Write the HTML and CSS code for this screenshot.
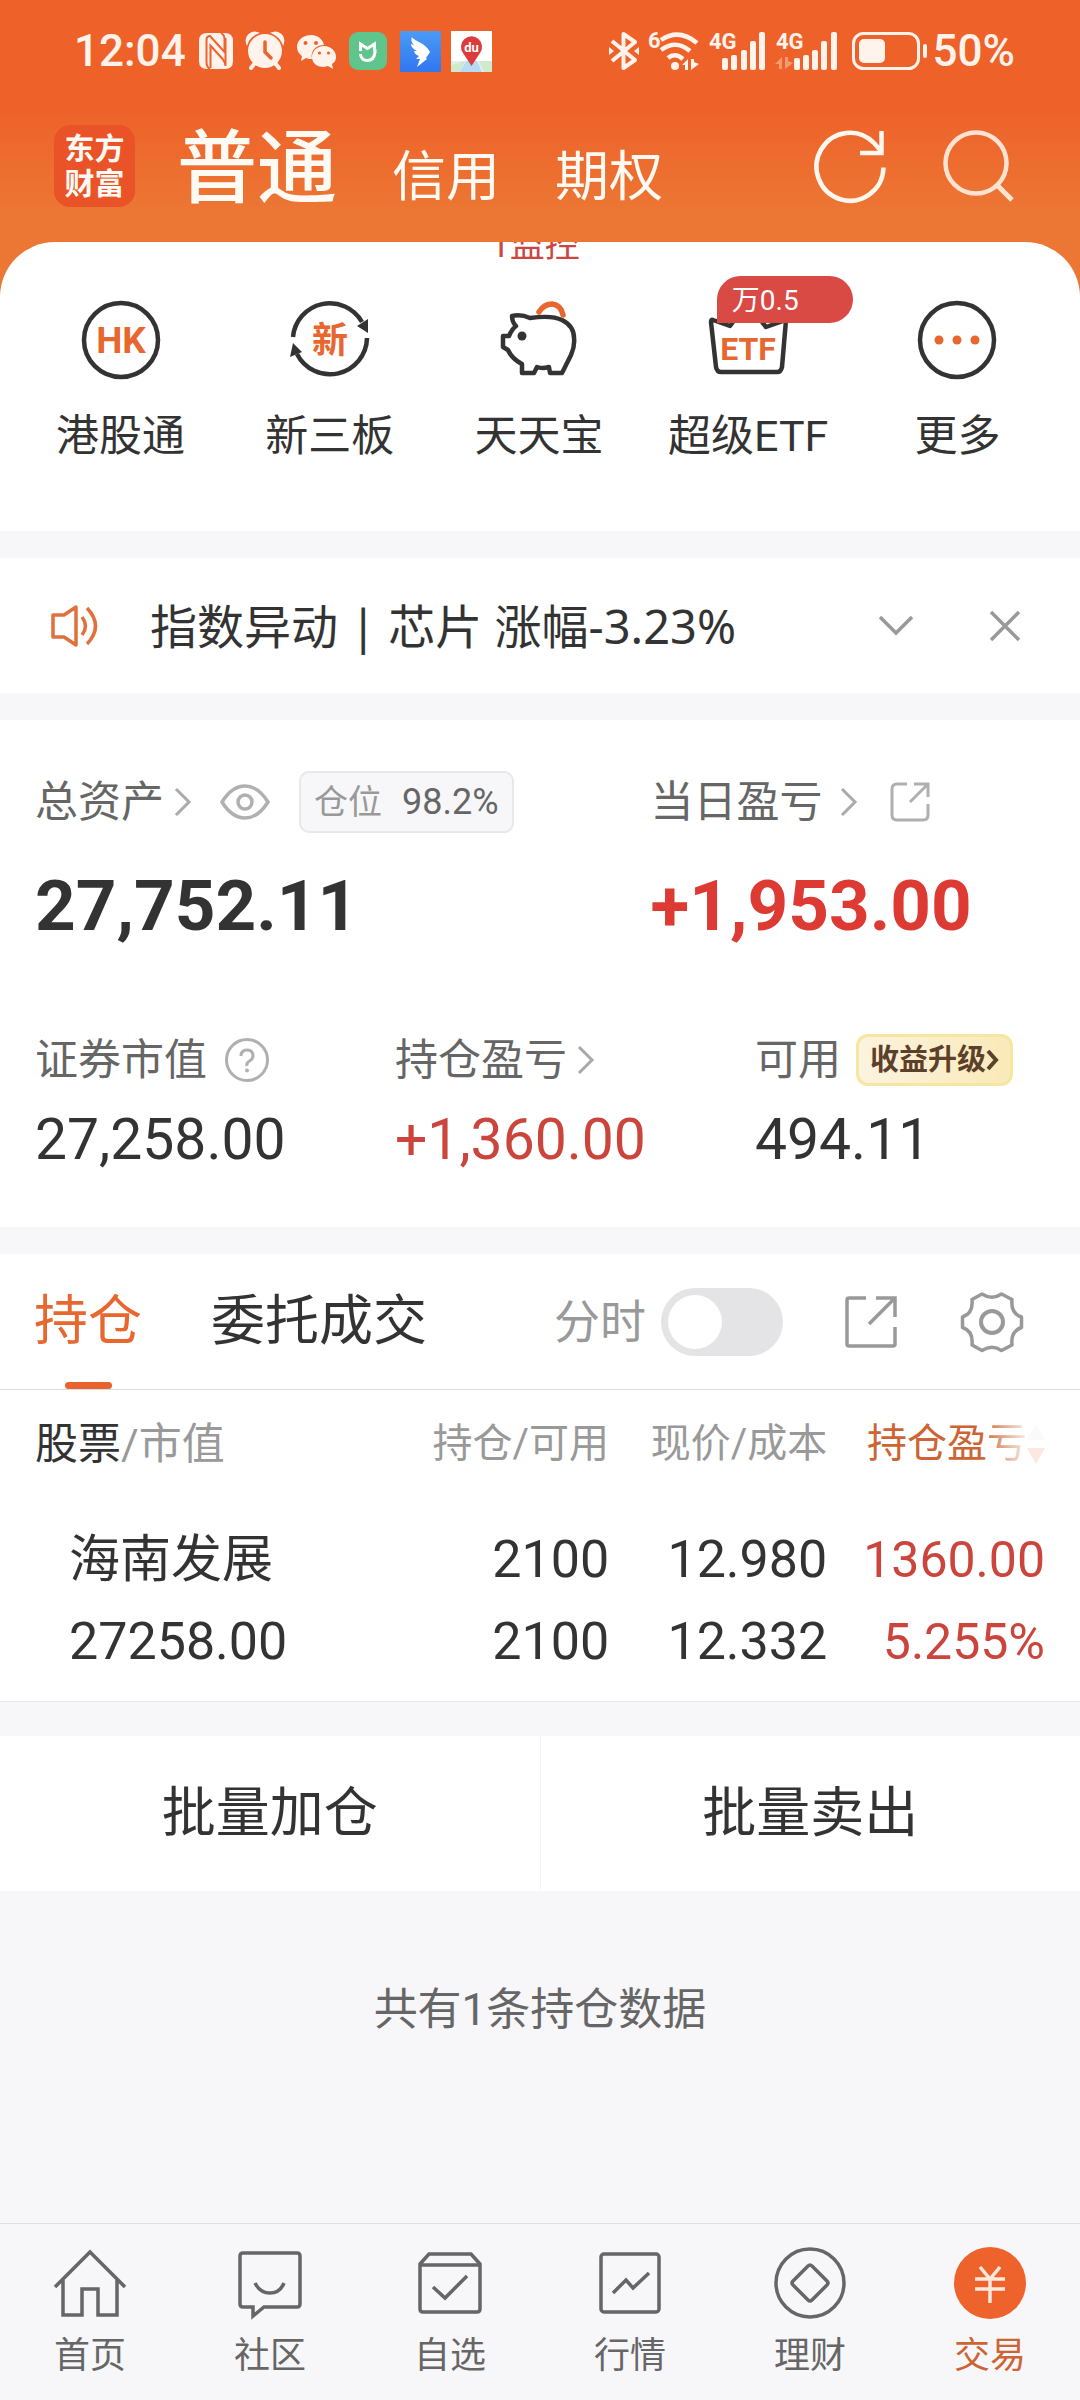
FILE: index.html
```html
<!DOCTYPE html>
<html lang="zh-CN">
<head>
<meta charset="utf-8">
<meta name="viewport" content="width=device-width, initial-scale=1">
<title>东方财富 - 交易</title>
<link rel="stylesheet" href="styles.css">
</head>
<body>
<header class="top">
  <div class="status">
    <div class="status-left">
      <span class="clock">12:04</span>
      <svg class="st-nfc" width="34" height="36" viewBox="0 0 34 36"><path d="M8 0H26Q34 0 34 8V28Q34 36 26 36H8Q0 36 0 28V8Q0 0 8 0Z" fill="#fff3ec"/><path d="M11 36Q7.500 34 7.500 29V7Q7.500 3 11 3L25.500 19V6Q25.500 2 22 0M11.500 35V12.500L24 26.500Q26.500 30 26.500 33V5" fill="none" stroke="#ee632b" stroke-width="2"/></svg>
      <svg width="38" height="38" viewBox="0 0 38 38"><g fill="#fff3ec"><circle cx="19" cy="19" r="17"/><path d="M1 11A8 8 0 0 1 11 1Q4 4 1 11ZM37 11A8 8 0 0 0 27 1Q34 4 37 11Z" stroke="#fff3ec" stroke-width="2"/></g><path d="M9 31L5 36M29 31L33 36" stroke="#fff3ec" stroke-width="4" stroke-linecap="round"/><path d="M19 10V20L25 26" fill="none" stroke="#ee632b" stroke-width="3.500" stroke-linecap="round"/></svg>
      <svg width="39" height="36" viewBox="0 0 39 36"><path d="M14 2C6 2 0 7 0 14C0 18 2 21 5 23L4 28L9 25C11 26 13 26 15 26C13 18 19 12 27 12C26 6 20 2 14 2Z" fill="#fff3ec"/><path d="M27 13C20 13 15 18 15 24C15 31 21 34 27 34L31 33L36 36L35 31C38 29 39 27 39 24C39 18 34 13 27 13Z" fill="#fff3ec"/><g fill="#ee632b"><circle cx="8.500" cy="10" r="2"/><circle cx="19" cy="10" r="2"/><circle cx="22.500" cy="20" r="1.600"/><circle cx="31.500" cy="20" r="1.600"/></g></svg>
      <svg width="38" height="38" viewBox="0 0 38 38"><rect width="38" height="38" rx="9" fill="#5fc58c"/><path d="M11.500 19V12L18.500 16.500L25.500 12V19" fill="none" stroke="#fff" stroke-width="3"/><path d="M11.500 22Q12 28.500 18.500 28.500T26 20V17" fill="none" stroke="#fff" stroke-width="3"/></svg>
      <svg class="st-wing" width="41" height="41" viewBox="0 0 41 41"><defs><linearGradient id="wing" x1="0" y1="0" x2="0" y2="1"><stop offset="0" stop-color="#4a9bf5"/><stop offset="1" stop-color="#3275f0"/></linearGradient></defs><rect width="41" height="41" fill="url(#wing)"/><path d="M12 6C14 10 26 12 30 21L26 27L27 28L17 36L20 28H16L19 25Q15 24 14 20L17 20Q11 17 11 13L14 14Q10 10 12 6Z" fill="#fff"/></svg>
      <svg width="41" height="41" viewBox="0 0 41 41"><rect width="41" height="41" fill="#fff"/><path d="M0 30H41V41H0Z" fill="#e4eef0"/><path d="M0 41V34L14 30L9 41ZM41 41V30H28L33 41Z" fill="#cfe9cb"/><path d="M15 30H26L31 41H9Z" fill="#b5dcf5"/><path d="M20.500 35L12 22A10.500 10.500 0 1 1 29 22Z" fill="#dd3b3b"/><text x="20.500" y="21" class="du">du</text></svg>
    </div>
    <div class="status-right">
      <svg width="30" height="38" viewBox="0 0 30 38"><path d="M3 9L26 28L14.500 36V2L26 10L3 29" fill="none" stroke="#fff3ec" stroke-width="4" stroke-linejoin="round"/><path d="M0 15L5 19L0 23ZM30 15L25 19L30 23Z" fill="#fff3ec"/></svg>
      <svg class="st-wifi" width="52" height="40" viewBox="0 0 52 40"><text x="0" y="17" class="mini">6</text><path d="M13 9Q31-3 49 12M13 19Q28 8 42 20M20 27Q27 21 35 28" fill="none" stroke="#fff3ec" stroke-width="4.500"/><circle cx="27" cy="35" r="4" fill="#fff3ec"/><path d="M34 34L40 28V39H37V34ZM43 28V39L51 33L46 31V28Z" fill="#fff3ec"/></svg>
      <svg class="st-sig" width="57" height="40" viewBox="0 0 57 40"><text x="0" y="18" class="mini">4G</text><g fill="#fff3ec"><rect x="13" y="27" width="6" height="12" rx="2"/><rect x="22" y="24" width="6" height="15" rx="2"/><rect x="32" y="19" width="6" height="20" rx="2"/><rect x="41" y="10" width="6" height="29" rx="2"/><rect x="50" y="1" width="6" height="38" rx="2"/></g></svg>
      <svg class="st-sig" width="62" height="40" viewBox="0 0 62 40"><text x="1" y="18" class="mini">4G</text><path d="M0 33L7 26V38H4V33ZM10 26V38L18 32L13 30V26Z" fill="#f79a72"/><g fill="#fff3ec"><rect x="19" y="27" width="6" height="12" rx="2"/><rect x="28" y="24" width="6" height="15" rx="2"/><rect x="37" y="19" width="6" height="20" rx="2"/><rect x="46" y="10" width="6" height="29" rx="2"/><rect x="56" y="1" width="6" height="38" rx="2"/></g></svg>
      <svg class="st-bat" width="76" height="40" viewBox="0 0 76 40"><rect x="1.500" y="2.500" width="65" height="35" rx="10" fill="none" stroke="#fff3ec" stroke-width="3"/><rect x="7" y="8" width="26" height="24" rx="5" fill="#fff3ec"/><rect x="71" y="13" width="4" height="14" rx="2" fill="#fff3ec"/></svg>
      <span class="clock">50%</span>
    </div>
  </div>
  <div class="titlebar">
    <a class="logo" href="#"><span>东方</span><span>财富</span></a>
    <nav class="accounts" aria-label="账户">
      <a class="current" href="#">普通</a><a href="#">信用</a><a href="#">期权</a>
    </nav>
    <button class="icon-btn" aria-label="刷新"><svg width="72" height="74" viewBox="0 0 72 74"><path d="M68.500 38.500A33.500 34 0 1 1 59 14L66 22" fill="none" stroke="#fff6ee" stroke-width="4.500"/><path d="M66.500 2V24H45" fill="none" stroke="#fff6ee" stroke-width="4.500"/></svg></button>
    <button class="icon-btn search" aria-label="搜索"><svg width="72" height="74" viewBox="0 0 72 74"><circle cx="33" cy="34" r="30.500" fill="none" stroke="#ffe3d0" stroke-width="4.500"/><path d="M54 56L69 71" stroke="#ffe3d0" stroke-width="5"/></svg></button>
  </div>
</header>

<main>
  <section class="shortcuts">
    <div class="ticker"><span>1监控</span></div>
    <div class="grid">
      <a href="#"><svg width="80" height="80" viewBox="0 0 80 80"><circle cx="40" cy="40" r="37" class="ink"/><text x="40" y="53" class="hot hk">HK</text></svg><span>港股通</span></a>
      <a href="#"><svg width="80" height="80" viewBox="0 0 80 80"><path d="M3 37A37 37 0 0 1 72 22" class="ink"/><path d="M77 38A37 37 0 0 1 7 54" class="ink"/><path d="M67 26L78 19V33ZM3 43L0 57L12 52Z" fill="#333"/><text x="40" y="53" class="hot xin">新</text></svg><span>新三板</span></a>
      <a href="#"><svg width="80" height="80" viewBox="0 0 80 80"><path d="M13 16Q22 14 31 18Q53 15 63 20Q75 26 75 38Q76 46 72 55L63 73H51L50 67Q43 69 38 67L35 73H23V64Q13 59 9 50L4 47V36H10Q13 29 17 26Q13 22 13 16Z" class="ink"/><circle cx="23" cy="36" r="4.500" fill="#333"/><path d="M40 12Q45 4 53 4Q62 5 64 15" fill="none" stroke="#e8672f" stroke-width="5.500" stroke-linecap="round"/></svg><span>天天宝</span></a>
      <a href="#"><svg width="80" height="80" viewBox="0 0 80 80"><path d="M25 22L22 26L5 20Q3 19 3 22L8 67Q9 72 13 72H69Q73 72 74 67L78 20L58 27L54 22" class="ink"/><text x="40" y="60" class="hot etf">ETF</text></svg><span>超级ETF</span><b class="badge">万0.5</b></a>
      <a href="#"><svg width="80" height="80" viewBox="0 0 80 80"><circle cx="40" cy="40" r="37" class="ink"/><g fill="#e8672f"><circle cx="22" cy="40" r="4.500"/><circle cx="40" cy="40" r="4.500"/><circle cx="58" cy="40" r="4.500"/></g></svg><span>更多</span></a>
    </div>
  </section>

  <section class="notice">
    <svg width="48" height="44" viewBox="0 0 48 44"><path d="M2 11H13L25 3V41L13 33H2Z M31 13Q38 22 31 31M36 4Q53 22 36 40" fill="none" stroke="#e0703c" stroke-width="3.500" stroke-linejoin="round"/></svg>
    <p>指数异动 | 芯片 涨幅-3.23%</p>
    <button class="icon-btn" aria-label="展开"><svg width="36" height="24" viewBox="0 0 36 24"><path d="M2 3L18 19L34 3" fill="none" stroke="#999" stroke-width="3.500"/></svg></button>
    <button class="icon-btn close" aria-label="关闭"><svg width="32" height="32" viewBox="0 0 32 32"><path d="M2 2L30 30M30 2L2 30" fill="none" stroke="#999" stroke-width="3.500"/></svg></button>
  </section>

  <section class="assets">
    <div class="primary">
      <div>
        <div class="label"><a href="#">总资产<svg class="chev" width="18" height="30" viewBox="0 0 18 30"><path d="M2 2L15 15L2 28"/></svg></a>
          <button class="icon-btn eye" aria-label="隐藏金额"><svg width="50" height="36" viewBox="0 0 50 36"><path d="M2 18Q12 2 25 2T48 18Q38 34 25 34T2 18Z" fill="none" stroke="#b0b0b0" stroke-width="3.500"/><circle cx="25" cy="18" r="7" fill="none" stroke="#b0b0b0" stroke-width="3.500"/></svg></button>
          <span class="tag">仓位<b>98.2%</b></span></div>
        <strong>27,752.11</strong>
      </div>
      <div>
        <div class="label"><a href="#">当日盈亏<svg class="chev wide" width="18" height="30" viewBox="0 0 18 30"><path d="M2 2L15 15L2 28"/></svg></a>
          <button class="icon-btn share" aria-label="分享"><svg width="40" height="40" viewBox="0 0 40 40"><path d="M17 2H7Q2 2 2 7V33Q2 38 7 38H33Q38 38 38 33V22M24 2H38V15M38 2L20 20" fill="none" stroke="#b0b0b0" stroke-width="3"/></svg></button></div>
        <strong class="up">+1,953.00</strong>
      </div>
    </div>
    <div class="secondary">
      <div><div class="label">证券市值<button class="icon-btn help" aria-label="说明"><svg width="46" height="46" viewBox="0 0 46 46"><circle cx="23" cy="23" r="20.500" fill="none" stroke="#b0b0b0" stroke-width="3"/><path d="M17 19Q17 13 23 13T29 19Q29 22 25.500 24T23 29" fill="none" stroke="#b0b0b0" stroke-width="3"/><circle cx="23" cy="33.500" r="2" fill="#b0b0b0"/></svg></button></div><span class="value">27,258.00</span></div>
      <div><div class="label"><a href="#">持仓盈亏<svg class="chev" width="18" height="30" viewBox="0 0 18 30"><path d="M2 2L15 15L2 28"/></svg></a></div><span class="value down">+1,360.00</span></div>
      <div><div class="label">可用<a class="upgrade" href="#">收益升级<svg width="13" height="22" viewBox="0 0 13 22"><path d="M2 2L10 11L2 20" fill="none" stroke="#5c4029" stroke-width="4"/></svg></a></div><span class="value">494.11</span></div>
    </div>
  </section>

  <section class="holdings">
    <div class="tabs">
      <button class="tab on">持仓</button>
      <button class="tab">委托成交</button>
      <label class="toggle">分时<input type="checkbox"></label>
      <button class="icon-btn" aria-label="分享持仓"><svg width="52" height="52" viewBox="0 0 52 52"><path d="M21 2H4Q2 2 2 4V48Q2 50 4 50H48Q50 50 50 48V31M31 2H50V21M50 2L24 28" fill="none" stroke="#999" stroke-width="3.500"/></svg></button>
      <button class="icon-btn gear" aria-label="设置"><svg width="62" height="62" viewBox="0 0 62 62"><path d="M40.500 3L51 8.500C50 18 53 23.500 60.500 26V36.500C53 39 50 44.500 51 54L40.500 59.500C34 55 28 55 21 59.500L11 54C12 44.500 9 39 1.500 36.500V26C9 23.500 12 18 11 8.500L21 3C28 7.500 34 7.500 40.500 3Z" fill="none" stroke="#999" stroke-width="3.500" stroke-linejoin="round"/><circle cx="31" cy="31" r="11" fill="none" stroke="#999" stroke-width="4"/></svg></button>
    </div>
    <table>
      <thead><tr>
        <th scope="col"><b>股票</b>/市值</th>
        <th scope="col">持仓/可用</th>
        <th scope="col">现价/成本</th>
        <th scope="col" class="sorted"><span>持仓盈亏<svg width="18" height="40" viewBox="0 0 18 40"><path d="M9 0L18 16H0Z" fill="#ddd"/><path d="M9 40L18 24H0Z" fill="#e8672f"/></svg></span></th>
      </tr></thead>
      <tbody><tr>
        <td><span class="name">海南发展</span><span>27258.00</span></td>
        <td><span>2100</span><span>2100</span></td>
        <td><span>12.980</span><span>12.332</span></td>
        <td class="profit"><span>1360.00</span><span>5.255%</span></td>
      </tr></tbody>
    </table>
  </section>

  <div class="batch"><button>批量加仓</button><button>批量卖出</button></div>
  <p class="total">共有1条持仓数据</p>
</main>

<nav class="bottom" aria-label="主导航">
  <a href="#"><svg width="72" height="72" viewBox="0 0 72 72"><path d="M1 40L36 5L71 40M9 33V68H28V42H44V68H63V33"/></svg><span>首页</span></a>
  <a href="#"><svg width="72" height="72" viewBox="0 0 72 72"><path d="M9 6H63Q66 6 66 9V57Q66 60 63 60H30L19 69V60H9Q6 60 6 57V9Q6 6 9 6ZM21 36Q26 46 36 46T50 36"/></svg><span>社区</span></a>
  <a href="#"><svg width="72" height="72" viewBox="0 0 72 72"><path d="M6 17L15 7H57L66 17V62Q66 65 63 65H9Q6 65 6 62ZM6 18H66M19 40L31 51L53 29"/></svg><span>自选</span></a>
  <a href="#"><svg width="72" height="72" viewBox="0 0 72 72"><rect x="7" y="7" width="58" height="58" rx="3"/><path d="M19 46L32 33L39 41L55 26"/></svg><span>行情</span></a>
  <a href="#"><svg width="72" height="72" viewBox="0 0 72 72"><circle cx="36" cy="36" r="34"/><path d="M34 19Q36 17 38 19L53 34Q55 36 53 38L38 53Q36 55 34 53L19 38Q17 36 19 34Z"/></svg><span>理财</span></a>
  <a class="current" href="#"><svg width="72" height="72" viewBox="0 0 72 72"><circle cx="36" cy="36" r="36" class="disc"/><path class="yen" d="M26 20L36 32L46 20M21 32H51M21 42H51M36 32V56"/></svg><span>交易</span></a>
</nav>
</body>
</html>
```

FILE: styles.css
```css
* { box-sizing: border-box; }

body {
  margin: 0;
  min-height: 100vh;
  display: flex;
  flex-direction: column;
  background: #f7f7fa;
  color: #333;
  font-family: Roboto, "Noto Sans CJK SC", sans-serif;
  font-size: 43px;
}

a { color: inherit; text-decoration: none; }
button { border: 0; padding: 0; background: none; color: inherit; font: inherit; }
svg { display: block; flex: none; overflow: visible; }
p { margin: 0; }
.icon-btn { display: flex; flex: none; }

/* header */
.top {
  background: linear-gradient(#ee622a 0, #ee622a 110px, #ec7633 210px);
  color: #fffaf3;
  padding-bottom: 68px;
}
.status {
  height: 102px;
  padding: 0 65px 0 74px;
  display: flex;
  align-items: center;
  justify-content: space-between;
  color: #fff3ec;
}
.status-left, .status-right { display: flex; align-items: center; }
.status-left { gap: 13px; }
.status-left .st-wing { margin-right: -3px; }
.status-right { gap: 9px; }
.status-right .st-bat { margin-left: 6px; margin-right: -4px; }
.clock { font-size: 44px; font-weight: 500; line-height: 60px; }
.mini { font-size: 22px; font-weight: 700; fill: #fff3ec; }
.du { font-size: 13px; font-weight: 700; fill: #fff; text-anchor: middle; }

.titlebar {
  height: 127px;
  padding: 0 65px 0 54px;
  display: flex;
  align-items: center;
}
.logo {
  width: 81px;
  height: 82px;
  border-radius: 16px;
  background: #ea5328;
  display: flex;
  flex-direction: column;
  justify-content: center;
  align-items: center;
  font-size: 30px;
  font-weight: 700;
  line-height: 35px;
}
.accounts {
  flex: 1;
  margin-left: 42px;
  padding-top: 16px;
  display: flex;
  align-items: baseline;
  gap: 55px;
  font-size: 54px;
  line-height: 110px;
}
.accounts .current { font-size: 80px; font-weight: 500; }
.titlebar .search { margin-left: 56px; }

/* shortcuts */
.shortcuts {
  margin-top: -55px;
  border-radius: 55px 55px 0 0;
  background: #fff;
  padding: 0 18px 65px 16px;
}
.ticker {
  height: 22px;
  padding-right: 8px;
  overflow: hidden;
  display: flex;
  align-items: flex-end;
  justify-content: center;
  font-size: 35px;
  line-height: 36px;
  color: #cc4540;
}
.grid {
  display: grid;
  grid-template-columns: repeat(5, 1fr);
  padding-top: 36px;
}
.grid a {
  position: relative;
  display: flex;
  flex-direction: column;
  align-items: center;
  gap: 26px;
  line-height: 60px;
}
.ink { fill: none; stroke: #333; stroke-width: 4.5px; stroke-linejoin: round; }
.hot { fill: #e8672f; font-weight: 700; text-anchor: middle; }
.hk { font-size: 37px; }
.xin { font-size: 36px; }
.etf { font-size: 32px; }
.badge {
  position: absolute;
  top: -24px;
  left: 35%;
  width: 136px;
  height: 47px;
  padding-left: 15px;
  border-radius: 24px 24px 24px 0;
  background: #d94a45;
  color: #fff;
  font-size: 28px;
  font-weight: 400;
  line-height: 50px;
}

/* notice */
.notice {
  margin-top: 27px;
  height: 135px;
  padding: 0 59px 0 51px;
  background: #fff;
  display: flex;
  align-items: center;
  font-family: "Noto Sans", "Noto Sans CJK SC", sans-serif;
  font-size: 47px;
  line-height: 60px;
}
.notice p { flex: 1; margin-left: 51px; }
.notice .close { margin-left: 75px; }

/* assets */
.assets {
  margin-top: 27px;
  padding: 51px 0 52px;
  background: #fff;
}
.primary { display: grid; grid-template-columns: 57% 43%; }
.secondary { display: grid; grid-template-columns: repeat(3, 1fr); margin-top: 86px; }
.primary > div, .secondary > div { padding-left: 35px; }
.label { display: flex; align-items: center; color: #666; height: 62px; line-height: 60px; }
.secondary .label { height: 52px; }
.label a { display: flex; align-items: center; }
.chev { margin-left: 10px; fill: none; stroke: #aaa; stroke-width: 3px; }
.chev.wide { margin-left: 17px; }
.eye { margin-left: 28px; }
.share { margin-left: 32px; }
.help { margin-left: 17px; }
.tag {
  margin-left: 29px;
  height: 62px;
  padding: 0 13px;
  border: 2px solid #e8e8ea;
  border-radius: 10px;
  background: #f7f7fa;
  display: flex;
  align-items: center;
  gap: 20px;
  font-size: 34px;
  color: #999;
}
.tag b { font-size: 36px; font-weight: 400; color: #666; }
.primary strong { display: block; margin-top: 31px; font-size: 71px; line-height: 84px; }
.up { color: #dc3a32; }
.value { display: block; margin-top: 19px; font-size: 57px; line-height: 70px; }
.down, .profit { color: #cb453d; }
.label .upgrade {
  margin-left: 15px;
  height: 52px;
  padding: 0 11px;
  border: 3px solid #f6e7a0;
  border-radius: 12px;
  background: linear-gradient(90deg, #fcf3e0, #fae9b8);
  color: #5c4029;
  font-size: 29px;
  font-weight: 700;
  line-height: 46px;
}

/* holdings */
.holdings { margin-top: 27px; background: #fff; border-bottom: 1px solid #e9eaec; }
.tabs {
  height: 136px;
  padding: 0 57px 0 34px;
  border-bottom: 1px solid #dcdcde;
  display: flex;
  align-items: center;
}
.tab { align-self: stretch; margin-right: 69px; font-size: 54px; line-height: 60px; }
.tab.on { position: relative; color: #e8672f; }
.tab.on::after {
  content: "";
  position: absolute;
  left: calc(50% - 23px);
  bottom: 0;
  width: 47px;
  height: 7px;
  border-radius: 4px;
  background: #e8632d;
}
.toggle { margin-left: auto; margin-right: 62px; display: flex; align-items: center; gap: 15px; font-size: 46px; line-height: 60px; color: #999; }
.toggle input {
  appearance: none;
  margin: 0;
  width: 122px;
  height: 68px;
  padding: 7px;
  border-radius: 34px;
  background: #e4e4e6;
}
.toggle input::before { content: ""; display: block; width: 54px; height: 54px; border-radius: 50%; background: #fff; }
.toggle input:checked { background: #e8672f; }
.toggle input:checked::before { margin-left: auto; }
.gear { margin-left: 64px; }

table { width: 100%; table-layout: fixed; border-collapse: collapse; }
th, td { padding: 0; text-align: right; font-weight: 400; white-space: nowrap; }
th { height: 108px; font-size: 40px; line-height: 60px; color: #999; }
th:first-child { width: 36%; padding-left: 35px; text-align: left; font-size: 43px; }
th:nth-child(2) { width: 20.4%; }
th:nth-child(3) { width: 20.2%; }
th:last-child, td:last-child { padding-right: 35px; }
th b { font-weight: 400; color: #333; }
.sorted span { position: relative; display: inline-flex; align-items: center; color: #cd6433; }
.sorted span::after {
  content: "";
  position: absolute;
  inset: 0 0 0 auto;
  width: 64px;
  background: linear-gradient(90deg, rgba(255, 255, 255, 0), rgba(255, 255, 255, .86) 70%);
}
td { padding-top: 21px; padding-bottom: 18px; font-size: 52px; }
td:first-child { padding-left: 69px; text-align: left; }
td span { display: block; line-height: 82px; }
td .name { font-size: 51px; }
.profit { font-size: 50px; }

.batch { margin-top: 34px; display: flex; background: #fff; }
.batch button { flex: 1; height: 155px; font-size: 54px; line-height: 60px; }
.batch button + button { border-left: 1px solid #f3f4f6; }
.total { margin-top: 89px; text-align: center; color: #666; font-size: 44px; line-height: 60px; }

/* bottom navigation */
.bottom {
  margin-top: auto;
  padding: 23px 0 22px;
  border-top: 1px solid #e0e0e2;
  display: grid;
  grid-template-columns: repeat(6, 1fr);
  font-size: 36px;
  line-height: 44px;
  color: #666;
}
.bottom a { display: flex; flex-direction: column; align-items: center; gap: 15px; }
.bottom svg { fill: none; stroke: #666; stroke-width: 3.5px; }
.bottom .current { color: #cd6433; }
.bottom .disc { fill: #ee632b; stroke: none; }
.bottom .yen { stroke: #ffe9dc; }
```
